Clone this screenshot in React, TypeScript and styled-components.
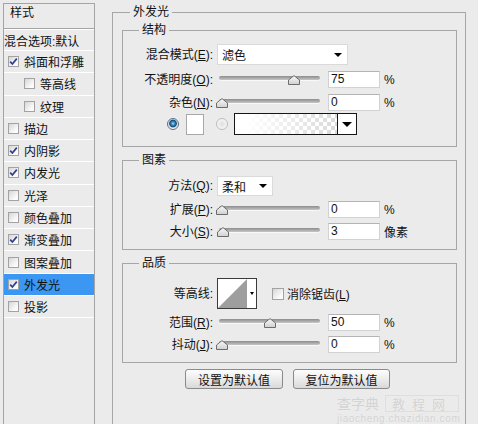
import React from 'react';
import styled, { createGlobalStyle } from 'styled-components';

const Global = createGlobalStyle`
  html, body { margin: 0; padding: 0; background: #ebebeb; }
  body {
    font-family: "Liberation Sans", "Noto Sans CJK SC", sans-serif;
    font-size: 12px;
    color: #111;
  }
`;

const Dialog = styled.div`
  position: relative;
  width: 478px;
  height: 424px;
  overflow: hidden;
  display: flex;
  align-items: flex-start;
  background: #ebebeb;
`;

/* ---------- left styles list ---------- */
const StylePanel = styled.div`
  flex: none;
  width: 90px;
  height: 440px;
  margin: 3px 0 0 3px;
  border: 1px solid #a4a4a4;
  border-bottom: none;
  display: flex;
  flex-direction: column;
`;

const PanelHeader = styled.div`
  height: 25px;
  box-sizing: border-box;
  padding: 2px 0 0 6px;
  line-height: 14px;
  border-bottom: 1px solid #a4a4a4;
`;

const BlendRow = styled.div`
  height: 22px;
  box-sizing: border-box;
  border-top: 1px solid #fff;
  border-bottom: 1px solid #fff;
  display: flex;
  align-items: center;
  white-space: nowrap;
`;

const LayerRow = styled.div<{ $sub?: boolean; $active?: boolean }>`
  height: 22.27px;
  box-sizing: border-box;
  border-bottom: 1px solid #fff;
  display: flex;
  align-items: center;
  gap: 5px;
  padding-left: ${(p) => (p.$sub ? 20 : 4)}px;
  background: ${(p) => (p.$active ? '#3b97f2' : 'transparent')};
  white-space: nowrap;
`;

const CheckBox = styled.span<{ $size?: number; $ml?: number }>`
  flex: none;
  width: ${(p) => p.$size ?? 11}px;
  height: ${(p) => p.$size ?? 11}px;
  margin-left: ${(p) => p.$ml ?? 0}px;
  box-sizing: border-box;
  border: 1px solid #a2a2a2;
  background: linear-gradient(135deg, #d6d6d6, #fbfbfb 75%);
  display: inline-flex;
  align-items: center;
  justify-content: center;
`;

/* ---------- right side ---------- */
const Main = styled.div`
  flex: 1;
  padding: 12px 12px 0 17px;
`;

const Group = styled.div<{ $mt?: number; $px?: boolean; $h?: number }>`
  border: 1px solid #a6a6a6;
  display: flex;
  flex-direction: column;
  margin-top: ${(p) => p.$mt ?? 0}px;
  padding: 0 ${(p) => (p.$px ? '8px 0 9px' : '0 0 0')};
  ${(p) => (p.$h ? `height: ${p.$h}px;` : '')}
`;

const GroupTitle = styled.div<{ $ml: number }>`
  align-self: flex-start;
  margin: -8px 0 0 ${(p) => p.$ml}px;
  padding: 0 3px;
  height: 15px;
  line-height: 15px;
  background: #ebebeb;
  white-space: nowrap;
`;

const GroupBody = styled.div<{ $pt: number; $pb: number }>`
  display: flex;
  flex-direction: column;
  padding: ${(p) => p.$pt}px 0 ${(p) => p.$pb}px;
`;

const Row = styled.div<{ $h: number; $mt: number }>`
  display: grid;
  grid-template-columns: 90px 1fr;
  column-gap: 4px;
  align-items: center;
  height: ${(p) => p.$h}px;
  margin-top: ${(p) => p.$mt}px;
`;

const Label = styled.span`
  text-align: right;
  white-space: nowrap;
  line-height: 14px;
`;

const Controls = styled.div`
  display: flex;
  align-items: center;
  height: 100%;
`;

const Select = styled.div<{ $w: number }>`
  width: ${(p) => p.$w}px;
  height: 100%;
  box-sizing: border-box;
  background: #fff;
  border: 1px solid #dadada;
  display: flex;
  align-items: center;
  justify-content: space-between;
  padding: 0 5px 0 4px;
`;

const Tri = styled.span<{ $w: number; $h: number }>`
  width: 0;
  height: 0;
  border-left: ${(p) => p.$w / 2}px solid transparent;
  border-right: ${(p) => p.$w / 2}px solid transparent;
  border-top: ${(p) => p.$h}px solid #000;
`;

const SliderBox = styled.div`
  position: relative;
  flex: none;
  width: 101px;
  height: 17px;
  margin-left: 2px;
`;

const Track = styled.div`
  margin-top: 5px;
  height: 4px;
  border-radius: 2px;
  background: linear-gradient(#8c8c8c, #c6c6c6);
  box-shadow: 0 1px 0 #f8f8f8;
`;

const Thumb = styled.svg`
  position: absolute;
  top: 4px;
`;

const Field = styled.div`
  flex: none;
  width: 52px;
  height: 17px;
  margin-left: 8px;
  box-sizing: border-box;
  background: #fff;
  border: 1px solid #d2d2d2;
  border-top-color: #b4b4b4;
  padding-left: 2px;
  line-height: 15px;
`;

const Unit = styled.span`
  margin-left: 4px;
  white-space: nowrap;
`;

const ColorRow = styled.div`
  display: flex;
  align-items: center;
  height: 22px;
  margin-top: 2px;
  padding-left: 44px;
`;

const Radio = styled.span<{ $on?: boolean; $ml?: number }>`
  flex: none;
  width: 12px;
  height: 12px;
  box-sizing: border-box;
  border-radius: 50%;
  margin-left: ${(p) => p.$ml ?? 0}px;
  border: 1px solid ${(p) => (p.$on ? '#56718a' : '#bcbcbc')};
  background: ${(p) =>
    p.$on
      ? 'radial-gradient(circle at 50% 45%, #a8e0fa 0, #3b8fc4 1.6px, #174a73 3.4px, #c7d3dc 4.2px, #f3f3f3 5px)'
      : 'radial-gradient(circle, #dedede 0, #ececec 3px, #f7f7f7 5px)'};
`;

const Swatch = styled.span`
  flex: none;
  width: 18px;
  height: 21px;
  margin-left: 7px;
  box-sizing: border-box;
  background: #fff;
  border: 1px solid #a8a8a8;
`;

const GradientPicker = styled.div`
  flex: none;
  display: flex;
  width: 123px;
  height: 22px;
  margin-left: 6px;
  box-sizing: border-box;
  border: 1px solid #161616;
  background: #fff;
`;

const GradientFill = styled.div`
  flex: 1;
  background:
    linear-gradient(to right, #fff 10%, rgba(255, 255, 255, 0) 95%),
    repeating-conic-gradient(#dcdcdc 0 25%, #ffffff 0 50%) 0 0 / 8px 8px;
`;

const PickerArrow = styled.div`
  flex: none;
  width: 18px;
  border-left: 1px solid #161616;
  display: flex;
  align-items: center;
  justify-content: center;
`;

const Contour = styled.div`
  flex: none;
  display: flex;
  width: 40px;
  height: 31px;
  box-sizing: border-box;
  border: 1px solid #3a3a3a;
  background: #fff;
`;

const ContourArrow = styled.div`
  flex: 1;
  display: flex;
  align-items: center;
  justify-content: center;
`;

const CheckLabel = styled.span`
  margin-left: 3px;
  white-space: nowrap;
`;

const ButtonBar = styled.div`
  display: flex;
  gap: 10px;
  margin-top: 6px;
  padding-left: 63px;
`;

const Button = styled.div<{ $w: number }>`
  width: ${(p) => p.$w}px;
  height: 20px;
  box-sizing: border-box;
  border: 1px solid #8a8a8a;
  border-radius: 3px;
  background: linear-gradient(#fdfdfd, #ececec 50%, #d9d9d9);
  display: flex;
  align-items: center;
  justify-content: center;
  white-space: nowrap;
`;

const Watermark = styled.div`
  position: absolute;
  right: 3px;
  bottom: 0;
  width: 138px;
  display: flex;
  flex-direction: column;
  gap: 1px;
  color: #d3d3d3;
  text-shadow: 0 0 1px #f4f4f4;
  font-family: "Noto Sans CJK SC", sans-serif;
`;

const WmTop = styled.div`
  display: flex;
  align-items: center;
  height: 18px;
  font-size: 14px;
  line-height: 16px;
  gap: 6px;
`;

const WmBox = styled.span`
  border: 1px solid #dedede;
  padding: 0 6px;
  letter-spacing: 7px;
  font-size: 13px;
  line-height: 15px;
`;

const WmUrl = styled.div`
  font-family: "Liberation Sans", sans-serif;
  font-size: 10px;
  line-height: 11px;
  height: 11px;
  letter-spacing: 0.6px;
  white-space: nowrap;
`;

/* ---------- helpers ---------- */
const Tick = () => (
  <svg width="9" height="9" viewBox="0 0 9 9">
    <path d="M1.2 4.6 L3.4 7 L7.8 1.6" fill="none" stroke="#2f3f8f" strokeWidth="1.7" />
  </svg>
);

const Slider: React.FC<{ value: number; max?: number }> = ({ value, max = 100 }) => {
  const center = 3 + (value / max) * 96;
  return (
    <SliderBox>
      <Track />
      <Thumb width="12" height="10" viewBox="0 0 12 10" style={{ left: center - 6 }}>
        <defs>
          <linearGradient id="tg" x1="0" y1="0" x2="0" y2="1">
            <stop offset="0" stopColor="#fbfbfb" />
            <stop offset="1" stopColor="#cfcfcf" />
          </linearGradient>
        </defs>
        <polygon points="0.5,9.5 0.5,5 6,0.6 11.5,5 11.5,9.5" fill="url(#tg)" stroke="#6c6c6c" />
      </Thumb>
    </SliderBox>
  );
};

const SliderRow: React.FC<{ label: string; k: string; value: number; max?: number; unit: string; mt: number }> = ({
  label,
  k,
  value,
  max,
  unit,
  mt,
}) => (
  <Row $h={17} $mt={mt}>
    <Label>
      {label}(<u>{k}</u>):
    </Label>
    <Controls>
      <Slider value={value} max={max} />
      <Field>{value}</Field>
      <Unit>{unit}</Unit>
    </Controls>
  </Row>
);

const layers = [
  { name: '斜面和浮雕', on: true },
  { name: '等高线', on: false, sub: true },
  { name: '纹理', on: false, sub: true },
  { name: '描边', on: false },
  { name: '内阴影', on: true },
  { name: '内发光', on: true },
  { name: '光泽', on: false },
  { name: '颜色叠加', on: false },
  { name: '渐变叠加', on: true },
  { name: '图案叠加', on: false },
  { name: '外发光', on: true, active: true },
  { name: '投影', on: false },
];

export default function App() {
  return (
    <>
      <Global />
      <Dialog>
        <StylePanel>
          <PanelHeader>样式</PanelHeader>
          <BlendRow>混合选项:默认</BlendRow>
          {layers.map((l) => (
            <LayerRow key={l.name} $sub={l.sub} $active={l.active}>
              <CheckBox>{l.on && <Tick />}</CheckBox>
              <span>{l.name}</span>
            </LayerRow>
          ))}
        </StylePanel>

        <Main>
          <Group $px $h={430}>
            <GroupTitle $ml={8}>外发光</GroupTitle>

            <Group $mt={10}>
              <GroupTitle $ml={16}>结构</GroupTitle>
              <GroupBody $pt={6} $pb={11}>
                <Row $h={21} $mt={0}>
                  <Label>
                    混合模式(<u>E</u>):
                  </Label>
                  <Controls>
                    <Select $w={131}>
                      <span>滤色</span>
                      <Tri $w={8} $h={4} />
                    </Select>
                  </Controls>
                </Row>
                <SliderRow label="不透明度" k="O" value={75} unit="%" mt={6} />
                <SliderRow label="杂色" k="N" value={0} unit="%" mt={6} />
                <ColorRow>
                  <Radio $on />
                  <Swatch />
                  <Radio $ml={12} />
                  <GradientPicker>
                    <GradientFill />
                    <PickerArrow>
                      <Tri $w={10} $h={5} />
                    </PickerArrow>
                  </GradientPicker>
                </ColorRow>
              </GroupBody>
            </Group>

            <Group $mt={13}>
              <GroupTitle $ml={16}>图素</GroupTitle>
              <GroupBody $pt={8} $pb={9}>
                <Row $h={20} $mt={0}>
                  <Label>
                    方法(<u>Q</u>):
                  </Label>
                  <Controls>
                    <Select $w={56}>
                      <span>柔和</span>
                      <Tri $w={8} $h={4} />
                    </Select>
                  </Controls>
                </Row>
                <SliderRow label="扩展" k="P" value={0} unit="%" mt={5} />
                <SliderRow label="大小" k="S" value={3} max={250} unit="像素" mt={5} />
              </GroupBody>
            </Group>

            <Group $mt={13}>
              <GroupTitle $ml={16}>品质</GroupTitle>
              <GroupBody $pt={7} $pb={9}>
                <Row $h={31} $mt={0}>
                  <Label>等高线:</Label>
                  <Controls>
                    <Contour>
                      <svg width="29" height="29" viewBox="0 0 29 29">
                        <polygon points="0,29 29,0 29,29" fill="#9e9e9e" />
                      </svg>
                      <ContourArrow>
                        <Tri $w={5} $h={3} />
                      </ContourArrow>
                    </Contour>
                    <CheckBox $size={12} $ml={15} />
                    <CheckLabel>
                      消除锯齿(<u>L</u>)
                    </CheckLabel>
                  </Controls>
                </Row>
                <SliderRow label="范围" k="R" value={50} unit="%" mt={5} />
                <SliderRow label="抖动" k="J" value={0} unit="%" mt={5} />
              </GroupBody>
            </Group>

            <ButtonBar>
              <Button $w={98}>设置为默认值</Button>
              <Button $w={97}>复位为默认值</Button>
            </ButtonBar>
          </Group>
        </Main>

        <Watermark>
          <WmTop>
            <span>查字典</span>
            <WmBox>教程网</WmBox>
          </WmTop>
          <WmUrl>jiaocheng.chazidian.com</WmUrl>
        </Watermark>
      </Dialog>
    </>
  );
}
